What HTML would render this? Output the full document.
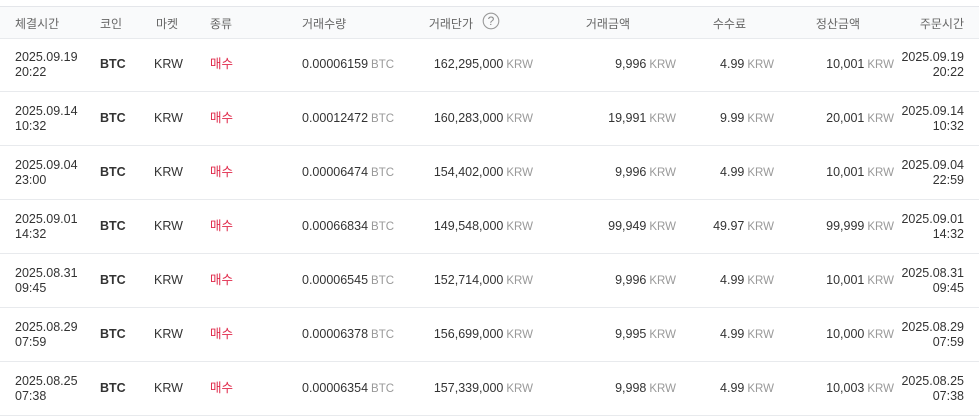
<!DOCTYPE html>
<html><head><meta charset="utf-8"><style>
body{margin:0;width:979px;height:418px;background:#fff;font-family:"Liberation Sans","Noto Sans CJK KR",sans-serif;font-size:12.5px;color:#333;position:relative;overflow:hidden}
.hd{position:absolute;left:0;top:6px;width:979px;height:31px;background:#f9fafb;border-top:1px solid #e4e6ea;border-bottom:1px solid #e8eaed}
.hd span{position:absolute;top:8px;color:#666;font-size:12px}
.row{position:absolute;left:0;width:979px;height:53px;border-bottom:1px solid #e8eaed}
.row>div{position:absolute;top:0;height:53px;display:flex;align-items:center;line-height:15px}
.row>div>p{margin:0}
.c1{left:15px}.c2{left:100px;font-weight:bold}.c3{left:154px}.c4{left:210px;color:#e0294a}.c5{left:302px}
.c6{right:446px}.c7{right:303px}.c8{right:205px}.c9{right:85px}.c10{right:15px;text-align:right}
.u{color:#999;font-size:11.5px;margin-left:3px}
</style></head><body>
<div class="hd">
<span style="left:15px">체결시간</span><span style="left:100px">코인</span><span style="left:156px">마켓</span><span style="left:210px">종류</span><span style="left:302px">거래수량</span>
<span style="right:506px">거래단가</span>
<svg style="position:absolute;left:482px;top:5px" width="18" height="18" viewBox="0 0 18 18"><circle cx="9" cy="9" r="7.8" fill="none" stroke="#999" stroke-width="1.1"/><text x="9" y="13.2" text-anchor="middle" font-size="12" fill="#888" font-family="Liberation Sans">?</text></svg>
<span style="right:349px">거래금액</span><span style="right:233px">수수료</span><span style="right:119px">정산금액</span><span style="right:15px">주문시간</span>
</div>

<div class="row" style="top:38px"><div class="c1">2025.09.19<br>20:22</div><div class="c2">BTC</div><div class="c3">KRW</div><div class="c4">매수</div><div class="c5"><p>0.00006159<span class="u">BTC</span></p></div><div class="c6"><p>162,295,000<span class="u">KRW</span></p></div><div class="c7"><p>9,996<span class="u">KRW</span></p></div><div class="c8"><p>4.99<span class="u">KRW</span></p></div><div class="c9"><p>10,001<span class="u">KRW</span></p></div><div class="c10">2025.09.19<br>20:22</div></div>
<div class="row" style="top:92px"><div class="c1">2025.09.14<br>10:32</div><div class="c2">BTC</div><div class="c3">KRW</div><div class="c4">매수</div><div class="c5"><p>0.00012472<span class="u">BTC</span></p></div><div class="c6"><p>160,283,000<span class="u">KRW</span></p></div><div class="c7"><p>19,991<span class="u">KRW</span></p></div><div class="c8"><p>9.99<span class="u">KRW</span></p></div><div class="c9"><p>20,001<span class="u">KRW</span></p></div><div class="c10">2025.09.14<br>10:32</div></div>
<div class="row" style="top:146px"><div class="c1">2025.09.04<br>23:00</div><div class="c2">BTC</div><div class="c3">KRW</div><div class="c4">매수</div><div class="c5"><p>0.00006474<span class="u">BTC</span></p></div><div class="c6"><p>154,402,000<span class="u">KRW</span></p></div><div class="c7"><p>9,996<span class="u">KRW</span></p></div><div class="c8"><p>4.99<span class="u">KRW</span></p></div><div class="c9"><p>10,001<span class="u">KRW</span></p></div><div class="c10">2025.09.04<br>22:59</div></div>
<div class="row" style="top:200px"><div class="c1">2025.09.01<br>14:32</div><div class="c2">BTC</div><div class="c3">KRW</div><div class="c4">매수</div><div class="c5"><p>0.00066834<span class="u">BTC</span></p></div><div class="c6"><p>149,548,000<span class="u">KRW</span></p></div><div class="c7"><p>99,949<span class="u">KRW</span></p></div><div class="c8"><p>49.97<span class="u">KRW</span></p></div><div class="c9"><p>99,999<span class="u">KRW</span></p></div><div class="c10">2025.09.01<br>14:32</div></div>
<div class="row" style="top:254px"><div class="c1">2025.08.31<br>09:45</div><div class="c2">BTC</div><div class="c3">KRW</div><div class="c4">매수</div><div class="c5"><p>0.00006545<span class="u">BTC</span></p></div><div class="c6"><p>152,714,000<span class="u">KRW</span></p></div><div class="c7"><p>9,996<span class="u">KRW</span></p></div><div class="c8"><p>4.99<span class="u">KRW</span></p></div><div class="c9"><p>10,001<span class="u">KRW</span></p></div><div class="c10">2025.08.31<br>09:45</div></div>
<div class="row" style="top:308px"><div class="c1">2025.08.29<br>07:59</div><div class="c2">BTC</div><div class="c3">KRW</div><div class="c4">매수</div><div class="c5"><p>0.00006378<span class="u">BTC</span></p></div><div class="c6"><p>156,699,000<span class="u">KRW</span></p></div><div class="c7"><p>9,995<span class="u">KRW</span></p></div><div class="c8"><p>4.99<span class="u">KRW</span></p></div><div class="c9"><p>10,000<span class="u">KRW</span></p></div><div class="c10">2025.08.29<br>07:59</div></div>
<div class="row" style="top:362px"><div class="c1">2025.08.25<br>07:38</div><div class="c2">BTC</div><div class="c3">KRW</div><div class="c4">매수</div><div class="c5"><p>0.00006354<span class="u">BTC</span></p></div><div class="c6"><p>157,339,000<span class="u">KRW</span></p></div><div class="c7"><p>9,998<span class="u">KRW</span></p></div><div class="c8"><p>4.99<span class="u">KRW</span></p></div><div class="c9"><p>10,003<span class="u">KRW</span></p></div><div class="c10">2025.08.25<br>07:38</div></div>
</body></html>
